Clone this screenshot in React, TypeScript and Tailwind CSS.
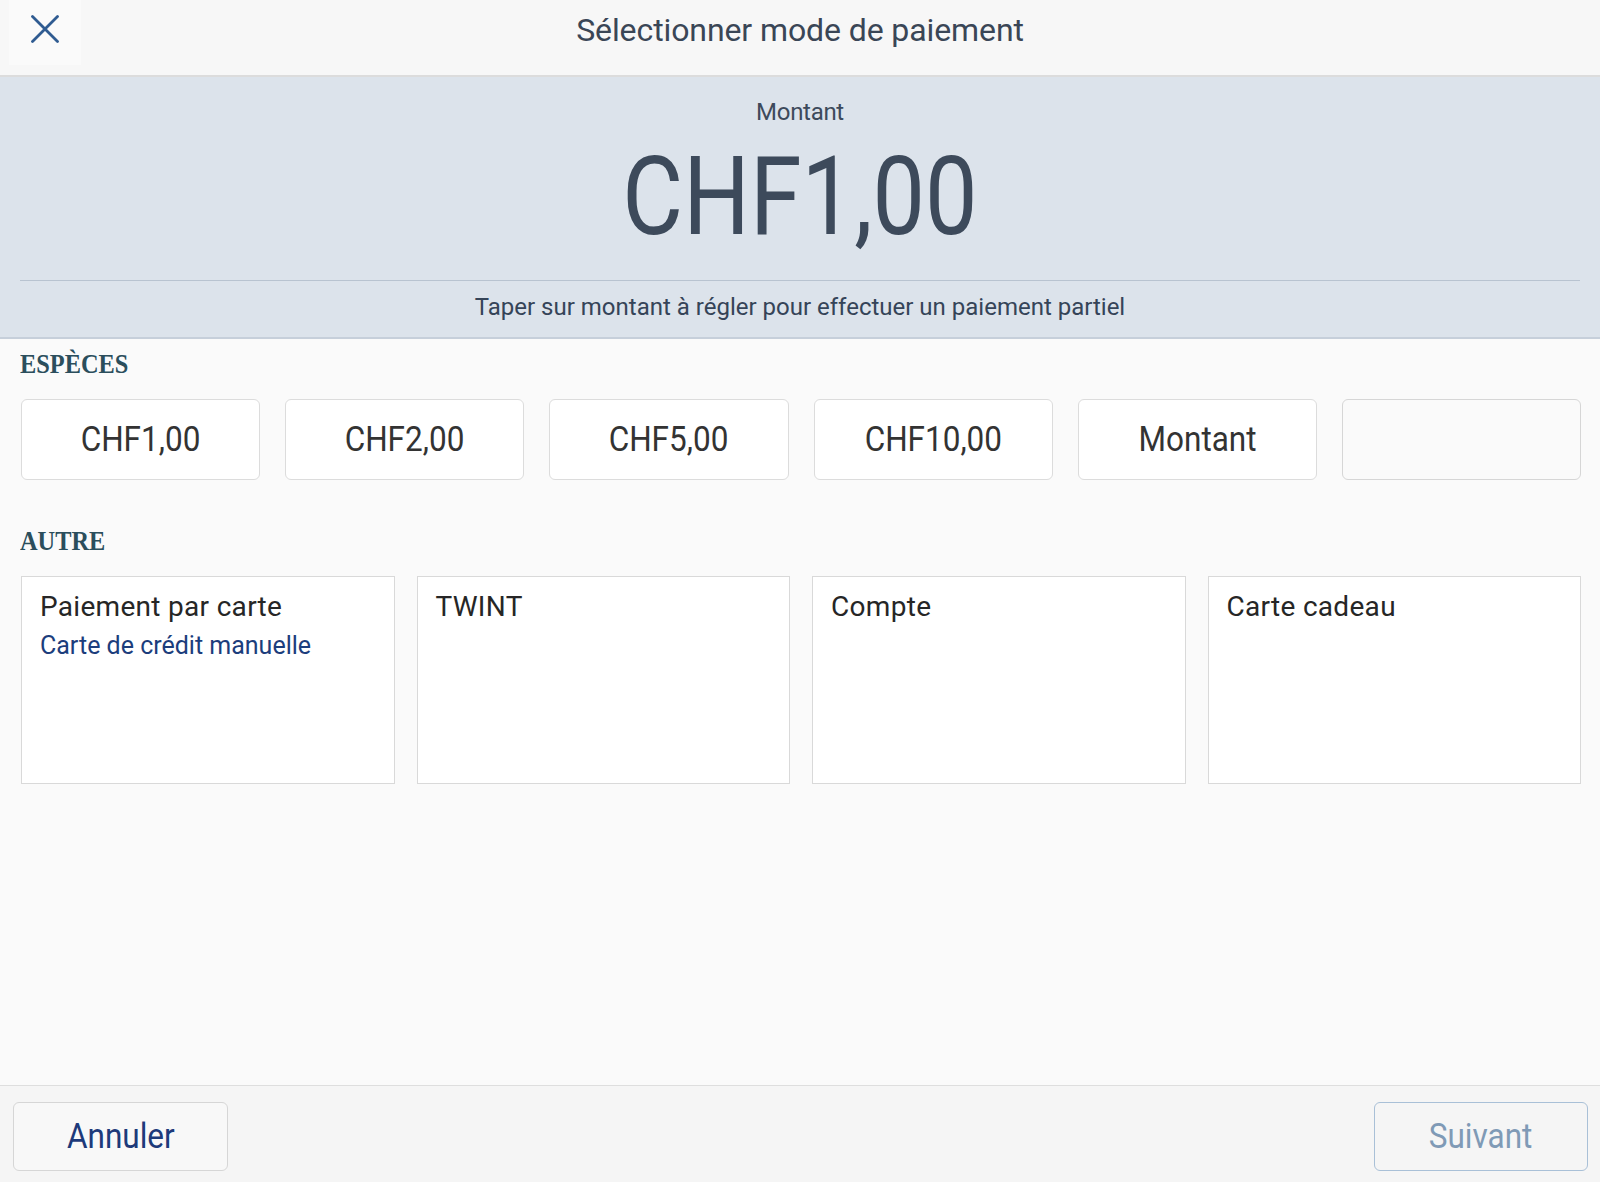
import React from "react";

const cash = ["CHF1,00", "CHF2,00", "CHF5,00", "CHF10,00", "Montant"];

const others: { title: string; sub?: string }[] = [
  { title: "Paiement par carte", sub: "Carte de crédit manuelle" },
  { title: "TWINT" },
  { title: "Compte" },
  { title: "Carte cadeau" },
];

export default function App() {
  return (
    <div className="w-full h-[1182px] flex flex-col bg-[#fafafa] font-['Roboto',sans-serif] overflow-hidden">
      {/* Header */}
      <div className="relative h-[77px] shrink-0 bg-[#f7f7f7] border-b-2 border-[#dcdcdc] flex justify-center items-start pt-[14px]">
        <button className="absolute left-[9px] top-0 w-[72px] h-[65px] bg-[#fafafa] flex items-start justify-center pt-[15px]">
          <svg width="28" height="28" viewBox="0 0 28 28" fill="none">
            <path d="M1.5 1.5 L26.5 26.5 M26.5 1.5 L1.5 26.5" stroke="#2f5b91" strokeWidth="2.8" strokeLinecap="round" />
          </svg>
        </button>
        <div className="text-[32px] leading-none text-[#3a4656] tracking-[-0.1px]">Sélectionner mode de paiement</div>
      </div>

      {/* Amount band */}
      <div className="shrink-0 bg-[#dce3eb] border-b-2 border-[#c6cfda] flex flex-col items-center pt-[23px] pb-[18px]">
        <div className="text-[24px] leading-none text-[#3d4a5b] tracking-[-0.3px]">Montant</div>
        <div className="mt-[18px] text-[110px] leading-none text-[#3d4a5b] scale-x-[0.85]">CHF1,00</div>
        <div className="mt-[28px] self-stretch mx-[20px] h-px bg-[#b8c3d0]" />
        <div className="mt-[14px] text-[24px] leading-none text-[#354458]">
          Taper sur montant à régler pour effectuer un paiement partiel
        </div>
      </div>

      {/* Content */}
      <div className="flex-1 flex flex-col">
        <div className="mt-[11px] pl-[20px]">
          <div className="w-fit origin-left scale-x-[0.87] text-[28px] leading-none font-bold text-[#2b4e5c] font-['Liberation_Serif',serif]">
            ESPÈCES
          </div>
        </div>
        <div className="mt-[21px] pl-[21px] pr-[19px] grid grid-cols-6 gap-[25px]">
          {cash.map((c) => (
            <div
              key={c}
              className="h-[81px] bg-white border border-[#dcdcdc] rounded-[6px] flex items-center justify-center"
            >
              <span className="text-[35px] leading-none text-[#333333] scale-x-[0.9]">{c}</span>
            </div>
          ))}
          <div className="h-[81px] bg-[#fafafa] border border-[#d6d6d6] rounded-[6px]" />
        </div>

        <div className="mt-[47px] pl-[20px]">
          <div className="w-fit origin-left scale-x-[0.87] text-[28px] leading-none font-bold text-[#2b4e5c] font-['Liberation_Serif',serif]">
            AUTRE
          </div>
        </div>
        <div className="mt-[21px] pl-[21px] pr-[19px] grid grid-cols-4 gap-[22px]">
          {others.map((o) => (
            <div key={o.title} className="h-[208px] bg-white border border-[#d9d9d9] pl-[18px] pt-[16px]">
              <div className="text-[28px] leading-none text-[#262626] tracking-[0.3px]">{o.title}</div>
              {o.sub && (
                <div className="mt-[12px] text-[25px] leading-none text-[#1c3d7c]">{o.sub}</div>
              )}
            </div>
          ))}
        </div>
      </div>

      {/* Footer */}
      <div className="h-[97px] shrink-0 bg-[#f5f5f5] border-t border-[#dedede] flex items-start justify-between pl-[13px] pr-[12px] pt-[16px]">
        <button className="w-[215px] h-[69px] bg-[#f8f8f8] border border-[#d6d6d6] rounded-[6px] flex items-center justify-center">
          <span className="text-[35px] leading-none text-[#1d3a7a] scale-x-[0.9]">Annuler</span>
        </button>
        <button className="w-[214px] h-[69px] bg-[#f5f5f5] border border-[#a9c0d7] rounded-[6px] flex items-center justify-center">
          <span className="text-[35px] leading-none text-[#7f9ab6] scale-x-[0.9]">Suivant</span>
        </button>
      </div>
    </div>
  );
}
